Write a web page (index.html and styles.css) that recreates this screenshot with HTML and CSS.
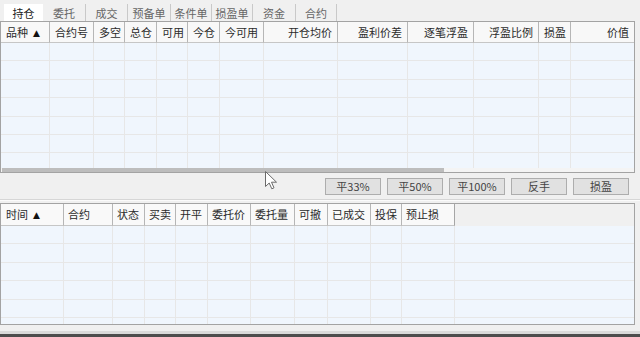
FILE: index.html
```html
<!DOCTYPE html>
<html lang="zh-CN">
<head>
<meta charset="utf-8">
<title>持仓</title>
<link rel="stylesheet" href="styles.css">
</head>
<body>
<div class="app">
  <div class="tabs">
    <div class="tab active">持仓</div>
    <div class="tab">委托</div>
    <div class="tab">成交</div>
    <div class="tab">预备单</div>
    <div class="tab">条件单</div>
    <div class="tab">损盈单</div>
    <div class="tab">资金</div>
    <div class="tab">合约</div>
  </div>

  <div class="panel upper">
    <div class="head grid-up">
      <div class="c">品种<span class="sort">▲</span></div>
      <div class="c">合约号</div>
      <div class="c">多空</div>
      <div class="c">总仓</div>
      <div class="c">可用</div>
      <div class="c">今仓</div>
      <div class="c">今可用</div>
      <div class="c r">开仓均价</div>
      <div class="c r">盈利价差</div>
      <div class="c r">逐笔浮盈</div>
      <div class="c r">浮盈比例</div>
      <div class="c">损盈</div>
      <div class="c r">价值</div>
    </div>
    <div class="body">
      <div class="row grid-up"><div></div><div></div><div></div><div></div><div></div><div></div><div></div><div></div><div></div><div></div><div></div><div></div><div></div></div>
      <div class="row grid-up"><div></div><div></div><div></div><div></div><div></div><div></div><div></div><div></div><div></div><div></div><div></div><div></div><div></div></div>
      <div class="row grid-up"><div></div><div></div><div></div><div></div><div></div><div></div><div></div><div></div><div></div><div></div><div></div><div></div><div></div></div>
      <div class="row grid-up"><div></div><div></div><div></div><div></div><div></div><div></div><div></div><div></div><div></div><div></div><div></div><div></div><div></div></div>
      <div class="row grid-up"><div></div><div></div><div></div><div></div><div></div><div></div><div></div><div></div><div></div><div></div><div></div><div></div><div></div></div>
      <div class="row grid-up"><div></div><div></div><div></div><div></div><div></div><div></div><div></div><div></div><div></div><div></div><div></div><div></div><div></div></div>
      <div class="row grid-up"><div></div><div></div><div></div><div></div><div></div><div></div><div></div><div></div><div></div><div></div><div></div><div></div><div></div></div>
    </div>
    <div class="hscroll"><div class="thumb"></div></div>
  </div>

  <div class="actions">
    <div class="btn">平33%</div>
    <div class="btn">平50%</div>
    <div class="btn">平100%</div>
    <div class="btn">反手</div>
    <div class="btn">损盈</div>
  </div>

  <div class="splitter"></div>

  <div class="panel lower">
    <div class="head grid-down">
      <div class="c">时间<span class="sort">▲</span></div>
      <div class="c">合约</div>
      <div class="c">状态</div>
      <div class="c">买卖</div>
      <div class="c">开平</div>
      <div class="c">委托价</div>
      <div class="c">委托量</div>
      <div class="c">可撤</div>
      <div class="c">已成交</div>
      <div class="c">投保</div>
      <div class="c last">预止损</div>
      <div class="fill"></div>
    </div>
    <div class="body">
      <div class="row grid-down"><div></div><div></div><div></div><div></div><div></div><div></div><div></div><div></div><div></div><div></div><div></div><div></div></div>
      <div class="row grid-down"><div></div><div></div><div></div><div></div><div></div><div></div><div></div><div></div><div></div><div></div><div></div><div></div></div>
      <div class="row grid-down"><div></div><div></div><div></div><div></div><div></div><div></div><div></div><div></div><div></div><div></div><div></div><div></div></div>
      <div class="row grid-down"><div></div><div></div><div></div><div></div><div></div><div></div><div></div><div></div><div></div><div></div><div></div><div></div></div>
      <div class="row grid-down"><div></div><div></div><div></div><div></div><div></div><div></div><div></div><div></div><div></div><div></div><div></div><div></div></div>
      <div class="row grid-down"><div></div><div></div><div></div><div></div><div></div><div></div><div></div><div></div><div></div><div></div><div></div><div></div></div>
    </div>
  </div>

  <div class="foot"></div>
  <div class="taskbar"></div>

  <svg class="cursor" width="13" height="19" viewBox="0 0 13 19">
    <path d="M0.5,0.5 L0.5,15.5 L4.2,12 L6.8,17.8 L9,16.8 L6.5,11.2 L11.5,11.2 Z" fill="#ffffff" stroke="#6a6a6a" stroke-width="1" stroke-linejoin="miter"/>
  </svg>
</div>
</body>
</html>
```

FILE: styles.css
```css
* {
  box-sizing: border-box;
}

html, body {
  margin: 0;
  padding: 0;
}

body {
  width: 640px;
  height: 337px;
  overflow: hidden;
  background: #f0f0f0;
  font-family: "Noto Sans CJK SC", "Microsoft YaHei", sans-serif;
  font-size: 11px;
  color: #333;
}

.app {
  position: relative;
  display: flex;
  flex-direction: column;
  height: 337px;
}

/* ---------- tabs ---------- */
.tabs {
  display: flex;
  height: 21px;
  padding: 4px 0 0 4px;
  flex: none;
}

.tab {
  height: 17px;
  line-height: 17px;
  padding-top: 1px;
  text-align: center;
  color: #666;
  border-right: 1px solid #c9c9c9;
  width: 42px;
}

.tab.active {
  background: #fff;
  color: #222;
  border-right: none;
  width: 39px;
}

.tab:nth-child(2) { width: 43px; }
.tab:nth-child(3) { width: 42px; }
.tab:nth-child(4) { width: 43px; }
.tab:nth-child(5) { width: 41px; }
.tab:nth-child(6) { width: 41px; }
.tab:nth-child(7) { width: 43px; }
.tab:nth-child(8) { width: 41px; }

/* ---------- panels ---------- */
.panel {
  width: 635px;
  border: 1px solid #a3a3a3;
  background: #f0f6fd;
  display: flex;
  flex-direction: column;
  overflow: hidden;
  flex: none;
}

.panel.upper {
  height: 152px;
}

.panel.lower {
  height: 122px;
  margin-top: 2px;
}

.grid-up {
  display: grid;
  grid-template-columns: 49px 44px 31px 32px 31px 32px 44px 74px 70px 66px 65px 32px 63px;
}

.grid-down {
  display: grid;
  grid-template-columns: 63px 49px 32px 31px 32px 43px 44px 33px 43px 31px 53px 1fr;
}

.head {
  flex: none;
  height: 21px;
  background: #f8f8f8;
}

.lower .head {
  height: 22px;
  background: #f0f0f0;
}

.head .c {
  border-right: 1px solid #b6b6b6;
  border-bottom: 1px solid #c6c6c6;
  line-height: 20px;
  padding: 0 4px 0 5px;
  white-space: nowrap;
  overflow: hidden;
  color: #2b2b2b;
  background: #f8f8f8;
}

.lower .head .c {
  line-height: 21px;
  padding-left: 4px;
  background: #f9f9f9;
}

.lower .head .c:first-child {
  padding-left: 5px;
}

.head .c.r {
  text-align: right;
  padding-right: 5px;
}

.upper .head .c:last-child {
  border-right: none;
}

.lower .head .c.last {
  border-right: 1px solid #a6a6a6;
}

.head .fill {
  background: #f0f0f0;
}

.sort {
  font-family: "DejaVu Sans", sans-serif;
  font-size: 9px;
  margin-left: 5px;
  position: relative;
  top: -1px;
  color: #111;
}

.body {
  flex: 1;
  overflow: hidden;
}

.row {
  height: 18.4px;
}

.row > div {
  border-right: 1px solid #e7e7e7;
  border-bottom: 1px solid #e7e7e7;
}

.grid-up.row > div:last-child,
.grid-down.row > div:last-child {
  border-right: none;
}

/* horizontal scrollbar */
.hscroll {
  flex: none;
  height: 4px;
  background: #f4f4f4;
  display: flex;
  padding-left: 1px;
}

.thumb {
  width: 442px;
  background: #bdbdbd;
}

/* ---------- action buttons ---------- */
.actions {
  flex: none;
  display: flex;
  justify-content: flex-end;
  gap: 6px;
  height: 22px;
  padding: 5px 11px 0 0;
}

.btn {
  width: 56px;
  height: 17px;
  border: 1px solid #adadad;
  background: #e1e1e1;
  color: #444;
  text-align: center;
  line-height: 15px;
  font-size: 11px;
}

.splitter {
  flex: none;
  margin-top: 4px;
  height: 2px;
  border-top: 1px solid #d6d6d6;
  border-bottom: 1px solid #fbfbfb;
}

/* ---------- bottom ---------- */
.foot {
  flex: none;
  margin-top: 6px;
  height: 3px;
  background: #dadada;
}

.taskbar {
  flex: none;
  height: 3px;
  background: #4d4d4d;
}

.cursor {
  position: absolute;
  left: 265px;
  top: 171px;
}
```
